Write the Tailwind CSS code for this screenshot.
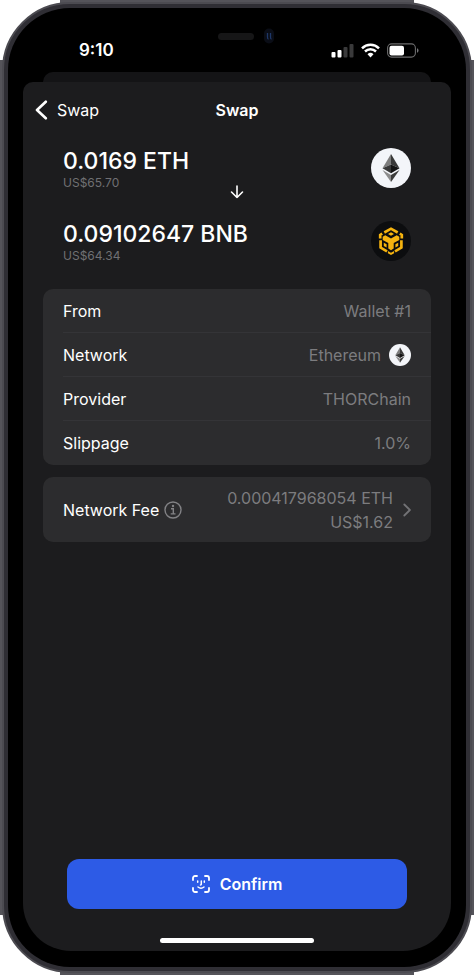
<!DOCTYPE html>
<html lang="en">
<head>
<meta charset="utf-8">
<meta name="viewport" content="width=device-width, initial-scale=1">
<title>Swap</title>
<script src="https://cdn.jsdelivr.net/npm/@tailwindcss/browser@4"></script>
</head>
<body class="bg-white font-['Inter','Liberation_Sans',sans-serif] text-white">
<svg class="hidden" aria-hidden="true">
  <symbol id="eth" viewBox="0 0 40 40">
    <circle cx="20" cy="20" r="20" fill="#f3f5f9"/>
    <path d="M20 6 11.5 20.3 20 16.4Z" fill="#7d7d7d"/>
    <path d="M20 6 28.5 20.3 20 16.4Z" fill="#393939"/>
    <path d="M11.5 20.3 20 16.4V25.3Z" fill="#393939"/>
    <path d="M28.5 20.3 20 16.4V25.3Z" fill="#141414"/>
    <path d="M11.5 22 20 27V34Z" fill="#8c8c8c"/>
    <path d="M28.5 22 20 27V34Z" fill="#3c3c3b"/>
  </symbol>
</svg>
<div class="relative flex min-h-screen flex-col p-[2px]">
  <div class="absolute inset-x-0 inset-y-[60px] bg-[#55545a]"></div>
  <div class="absolute inset-x-[60px] inset-y-0 bg-[#55545a]"></div>
  <div class="relative flex flex-1 flex-col rounded-[68px] border-2 border-[#4c4b51] bg-[#2f2e34] p-1">
    <div class="flex flex-1 flex-col rounded-[62px] bg-black px-[15px] pb-4">
      <header class="relative flex h-16 items-center justify-between pt-5 pr-8 pl-14">
        <span class="text-[17px] leading-5 font-semibold">9:10</span>
        <div class="absolute top-5 left-1/2 flex -translate-x-[19px] items-center">
          <span class="h-[7px] w-9 rounded-full bg-[#161617]"></span>
          <svg class="ml-[9px] h-4 w-3" viewBox="0 0 12 16" aria-hidden="true"><rect x="1" y="0.5" width="10" height="15" rx="5" fill="#0a0d16"/><path d="M4.500 5v4q0 2 1 2M7.500 5v4q0 2 1 2" fill="none" stroke="#1e3768" stroke-width="1.300"/></svg>
        </div>
        <div class="flex items-center gap-[7px]">
          <svg class="h-[15px] w-[23px]" viewBox="0 0 23 15" role="img" aria-label="Signal"><rect x="0.5" y="9" width="4" height="5.500" rx="1" fill="#fff"/><rect x="6.500" y="7" width="4" height="7.500" rx="1" fill="#fff"/><rect x="12.500" y="4" width="4" height="10.500" rx="1" fill="#3a3a3b"/><rect x="18.500" y="1" width="4" height="13.500" rx="1" fill="#3a3a3b"/></svg>
          <svg class="h-[15px] w-[19px]" viewBox="0 0 19 15" role="img" aria-label="Wi-Fi"><g fill="none" stroke="#fff" stroke-width="2.500"><path d="M1 5.300a12.200 12.200 0 0 1 17 0"/><path d="M4 8.500a8 8 0 0 1 11 0"/></g><path d="M6.500 11.200a4.400 4.400 0 0 1 6 0L9.500 14.500Z" fill="#fff"/></svg>
          <svg class="h-[15px] w-8" viewBox="0 0 32 15" role="img" aria-label="Battery"><rect x="0.6" y="0.900" width="27.800" height="13.200" rx="4" fill="none" stroke="#6c6c6d" stroke-width="1.100"/><rect x="2.500" y="2.700" width="14.500" height="9.800" rx="2" fill="#fff"/><path d="M30 5.300q1.500.5 1.500 2.200T30 9.700Z" fill="#77777a"/></svg>
        </div>
      </header>
      <div class="mx-5 h-[10px] rounded-t-[10px] bg-[#141416]"></div>
      <main class="flex flex-1 flex-col rounded-t-[10px] rounded-b-[48px] bg-[#1c1c1e] px-5">
        <nav class="-mx-2 grid h-14 grid-cols-[1fr_auto_1fr] items-center text-base leading-5">
          <a href="#" class="flex items-center gap-[9px]">
            <svg class="h-5 w-[13px]" viewBox="0 0 13 20" fill="none" stroke="#fff" stroke-width="2.600" stroke-linecap="round" stroke-linejoin="round" aria-hidden="true"><path d="M10.800 1.700 2 10l8.800 8.300"/></svg>
            Swap
          </a>
          <h1 class="font-semibold">Swap</h1>
        </nav>
        <section class="mt-2 px-5">
          <div class="grid h-[73px] grid-cols-[1fr_auto_1fr]">
            <div class="col-start-1 row-start-1 h-11 whitespace-nowrap">
              <p class="text-[23px] leading-[30px] font-medium">0.0169 ETH</p>
              <p class="text-xs leading-[14px] text-[#707073]">US$65.70</p>
            </div>
            <svg class="col-start-2 row-start-1 mt-[39px] size-[14px]" viewBox="0 0 14 14" fill="none" stroke="#fff" stroke-width="1.600" stroke-linecap="round" stroke-linejoin="round" aria-hidden="true"><path d="M7 1v11.500M1.500 7 7 12.500 12.500 7"/></svg>
            <div class="col-start-3 row-start-1 flex h-11 items-center justify-end"><svg class="size-10" role="img" aria-label="Ethereum"><use href="#eth"/></svg></div>
          </div>
          <div class="flex h-11 items-center justify-between">
            <div class="whitespace-nowrap">
              <p class="text-[23px] leading-[30px] font-medium">0.09102647 BNB</p>
              <p class="text-xs leading-[14px] text-[#707073]">US$64.34</p>
            </div>
            <svg class="size-10" viewBox="0 0 40 40" role="img" aria-label="BNB">
              <circle cx="20" cy="20" r="20" fill="#0c0d0f"/>
              <g fill="none" stroke="#f5b30f" stroke-width="2.700">
                <path d="M13.300 11.500 20 7.700l6.700 3.800"/>
                <path d="M9.200 17.500V13.900l2-1.200M30.800 17.500v-3.600l-2-1.200"/>
                <path d="M9.600 19.300v7.300l6.400 3.800M30.400 19.300v7.300L24 30.400"/>
              </g>
              <g fill="#f5b30f">
                <path d="m20 11.200 3 1.700-3 1.800-3-1.800Z"/>
                <path d="m14.300 14.200 5.700 3.200 5.700-3.200 2.600 1.500v3.200l-5.600 3.200v5.500L20 29.200l-2.700-1.600v-5.500l-5.600-3.200v-3.200Z"/>
                <path d="m12.800 21.700 2.800 1.600v3.200l-2.800-1.600ZM27.200 21.700l-2.800 1.600v3.200l2.800-1.600Z"/>
                <path d="m16.900 29.900 3.100 1.800 3.100-1.800v2.400L20 34.100l-3.100-1.800Z"/>
              </g>
            </svg>
          </div>
        </section>
        <dl class="mt-[26px] rounded-[10px] bg-[#2c2c2e] pl-5 text-base leading-5 text-[#7c7c7f]">
          <div class="flex h-11 items-center justify-between border-b border-[#343437] pr-5"><dt class="text-white">From</dt><dd>Wallet #1</dd></div>
          <div class="flex h-11 items-center justify-between border-b border-[#343437] pr-5"><dt class="text-white">Network</dt><dd class="flex items-center gap-2">Ethereum <svg class="size-[22px]" aria-hidden="true"><use href="#eth"/></svg></dd></div>
          <div class="flex h-11 items-center justify-between border-b border-[#343437] pr-5"><dt class="text-white">Provider</dt><dd>THORChain</dd></div>
          <div class="flex h-11 items-center justify-between pr-5"><dt class="text-white">Slippage</dt><dd>1.0%</dd></div>
        </dl>
        <button type="button" class="mt-3 flex h-[65px] items-center rounded-[10px] bg-[#2c2c2e] px-5 text-base leading-6 text-[#7c7c7f]">
          <span class="whitespace-nowrap text-white">Network Fee</span>
          <svg class="ml-[5px] size-[18px] shrink-0" viewBox="0 0 18 18" fill="none" stroke="#828285" stroke-width="1.400" aria-hidden="true"><circle cx="9" cy="9" r="8"/><path d="M7 7.700h2.300v5M6.700 12.900h4.800"/><circle cx="9" cy="5" r="1.200" fill="#828285" stroke="none"/></svg>
          <span class="ml-auto whitespace-nowrap text-right">0.000417968054 ETH<br>US$1.62</span>
          <svg class="ml-[10px] h-[14px] w-2 shrink-0" viewBox="0 0 8 14" fill="none" stroke="#727275" stroke-width="1.800" stroke-linecap="round" stroke-linejoin="round" aria-hidden="true"><path d="m1.300 1.500 5.600 5.500-5.600 5.500"/></svg>
        </button>
        <button type="button" class="mx-6 mt-auto flex h-[50px] items-center justify-center gap-[10px] rounded-xl bg-[#2d5be6] text-base leading-5 font-semibold">
          <svg class="size-[18px]" viewBox="0 0 18 18" fill="none" stroke="#fff" stroke-width="1.800" stroke-linecap="round" stroke-linejoin="round" aria-hidden="true"><path d="M1 5V3a2 2 0 0 1 2-2h2M13 1h2a2 2 0 0 1 2 2v2M17 13v2a2 2 0 0 1-2 2h-2M5 17H3a2 2 0 0 1-2-2v-2"/><path d="M5.700 6v1.200M12.300 6v1.200M9.300 6v3.200q0 .7-.8.700M6 12q3 2.400 6 0" stroke-width="1.500"/></svg>
          Confirm
        </button>
        <div class="mx-auto mt-[29px] mb-2 h-[5px] w-[154px] shrink-0 rounded-full bg-white"></div>
      </main>
    </div>
  </div>
</div>
</body>
</html>
